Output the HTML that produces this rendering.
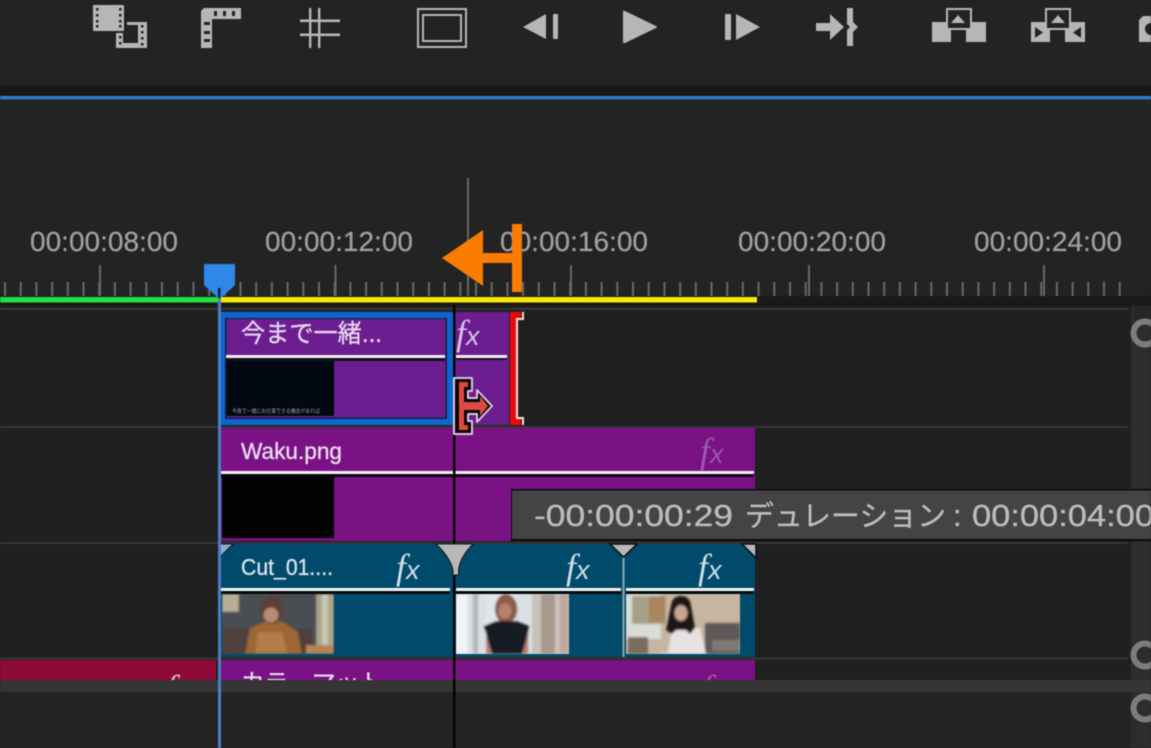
<!DOCTYPE html>
<html lang="ja">
<head>
<meta charset="utf-8">
<title>Timeline</title>
<style>
html,body{margin:0;padding:0;background:#222;width:1151px;height:748px;overflow:hidden}
svg{display:block;filter:blur(0.55px)}
text{font-family:"Liberation Sans","Noto Sans CJK JP",sans-serif}
.tc{font-size:28px;fill:#a0a0a0;stroke:#a0a0a0;stroke-width:.25px}
.fx{font-family:"Liberation Serif",serif;font-style:italic;font-size:36px}
.fx tspan{font-family:"Liberation Sans",sans-serif;font-size:27px}
.lb{stroke-width:.35px}
</style>
</head>
<body>
<svg width="1151" height="748" viewBox="0 0 1151 748" xmlns="http://www.w3.org/2000/svg">
<defs>
<clipPath id="c4"><rect x="0" y="660" width="1151" height="20"/></clipPath>
<clipPath id="t1"><rect x="222" y="594" width="112" height="60"/></clipPath>
<clipPath id="t2"><rect x="456" y="594" width="113" height="60"/></clipPath>
<clipPath id="t3"><rect x="626" y="594" width="114" height="60"/></clipPath>
<filter id="b1" x="-10%" y="-10%" width="120%" height="120%"><feGaussianBlur stdDeviation="1"/></filter>
</defs>

<rect width="1151" height="748" fill="#232323"/>
<rect y="85" width="1151" height="11" fill="#181818"/>
<rect y="96" width="1151" height="3.4" fill="#2b7dcb"/>

<!-- Toolbar icons -->
<g fill="#b6b6b6">
  <rect x="93" y="5" width="31" height="26" rx="1"/>
  <g fill="#222">
    <rect x="96" y="8" width="2.5" height="2.500"/><rect x="96" y="14" width="2.500" height="2.500"/><rect x="96" y="20" width="2.500" height="2.500"/><rect x="96" y="25" width="2.500" height="2.500"/>
    <rect x="119" y="8" width="2.500" height="2.500"/><rect x="119" y="14" width="2.500" height="2.500"/><rect x="119" y="20" width="2.500" height="2.500"/><rect x="119" y="25" width="2.500" height="2.500"/>
  </g>
  <path d="M127 22H147V48H116V33H123V43H138V25H127Z"/>
  <g fill="#222">
    <rect x="119" y="36" width="2.500" height="2.500"/><rect x="119" y="42" width="2.500" height="2.500"/>
    <rect x="141" y="25" width="2.500" height="2.500"/><rect x="141" y="31" width="2.500" height="2.500"/><rect x="141" y="37" width="2.500" height="2.500"/><rect x="141" y="43" width="2.500" height="2.500"/>
  </g>

  <path d="M204 8H241V19H212V48H201V11Z"/>
  <g fill="#222">
    <rect x="214" y="11" width="3" height="5"/><rect x="223" y="11" width="3" height="5"/><rect x="232" y="11" width="3" height="5"/>
    <rect x="204" y="22" width="6" height="3"/><rect x="204" y="31" width="6" height="3"/><rect x="204" y="39" width="6" height="3"/>
  </g>

  <rect x="309" y="8" width="2.4" height="40"/><rect x="318" y="8" width="2.4" height="40"/>
  <rect x="300" y="19.5" width="40" height="2.6"/><rect x="300" y="33.5" width="40" height="2.6"/>

  <path fill-rule="evenodd" d="M417 8H467V48H417ZM419 10V46H465V10Z"/>
  <path fill-rule="evenodd" d="M422 14H462V42H422ZM424 16V40H460V16Z"/>

  <path d="M523 27L546 14V39Z"/><rect x="553" y="14" width="5" height="25" rx="1"/>

  <path d="M623 12Q623 10 625 11L656 26Q658 27 656 28L625 43Q623 44 623 42Z"/>

  <rect x="725" y="14" width="6" height="26" rx="1"/><path d="M736 14L760 27L736 40Z"/>

  <path d="M816 23H830V14L844 27L830 40V31H816Z"/>
  <path d="M847 8H853V22L858 27L853 32V46H847V30L850 27L847 24Z"/>

  <path d="M932 22H947V30H951V42H932Z"/><path d="M971 22H986V42H966V30H971Z"/>
  <path fill-rule="evenodd" d="M946 8H972V30H946ZM948 10V28H970V10Z"/>
  <path d="M958 15L965 23H951Z"/>

  <path fill-rule="evenodd" d="M1031 22H1046V30H1050V42H1031ZM1035 27V38L1043 32.5Z"/>
  <path fill-rule="evenodd" d="M1070 22H1085V42H1065V30H1070ZM1081 27L1073 32.5L1081 38Z"/>
  <path fill-rule="evenodd" d="M1045 8H1071V30H1045ZM1047 10V28H1069V10Z"/>
  <path d="M1058 15L1065 23H1051Z"/>

  <path d="M1139 20L1143 16H1151V42H1139Z"/>
</g>
<circle cx="1151" cy="29" r="6" fill="#232323"/>

<!-- Ruler -->
<rect x="467" y="178" width="2" height="118" fill="#666"/>
<text class="tc" x="30" y="251" textLength="148" lengthAdjust="spacingAndGlyphs">00:00:08:00</text>
<text class="tc" x="265" y="251" textLength="148" lengthAdjust="spacingAndGlyphs">00:00:12:00</text>
<text class="tc" x="500" y="251" textLength="148" lengthAdjust="spacingAndGlyphs">00:00:16:00</text>
<text class="tc" x="738" y="251" textLength="148" lengthAdjust="spacingAndGlyphs">00:00:20:00</text>
<text class="tc" x="974" y="251" textLength="148" lengthAdjust="spacingAndGlyphs">00:00:24:00</text>
<line x1="4" y1="289" x2="1124" y2="289" stroke="#686868" stroke-width="14" stroke-dasharray="2 13.7"/>
<path d="M100 265V296M335.5 265V296M571 265V296M809 265V296M1044 265V296" stroke="#686868" stroke-width="2" fill="none"/>

<!-- Track area -->
<rect y="296" width="1151" height="10" fill="#1a1a1a"/>
<rect y="306" width="1131" height="374" fill="#202020"/>
<rect y="297" width="219" height="5.5" fill="#1fe23f"/>
<rect x="219" y="297" width="538" height="5.5" fill="#f6e800"/>
<g fill="#363636">
  <rect y="308" width="1128" height="2"/><rect y="426" width="1128" height="2"/>
  <rect y="542" width="1128" height="2"/><rect y="657.5" width="1128" height="2"/>
</g>

<!-- Scrollbar -->
<rect x="1131" y="306" width="20" height="442" fill="#2d2d2d"/>
<rect x="1134" y="306" width="17" height="14" fill="#262626"/>
<g fill="none" stroke="#7d7d7d" stroke-width="6">
  <circle cx="1145" cy="333" r="11.5"/><circle cx="1145" cy="655" r="11.5"/><circle cx="1145" cy="708" r="11.5"/>
</g>

<!-- V clip 1 selected -->
<rect x="219" y="312" width="235" height="113" fill="#0b66cf"/>
<rect x="225" y="318" width="222" height="101" fill="#0f1f3a"/>
<rect x="226.5" y="319" width="219" height="98.5" fill="#6c1d90"/>
<rect x="226" y="355" width="219" height="3" fill="#f4eef6"/>
<rect x="226" y="358" width="219" height="3" fill="#12101c"/>
<rect x="226.5" y="361" width="107.5" height="55" fill="#020913"/>
<text class="lb" x="241" y="342" font-size="25" fill="#e5d5ee" stroke="#e5d5ee" textLength="141" lengthAdjust="spacingAndGlyphs">今まで一緒...</text>
<text x="232" y="413" font-size="5.5" fill="#9a9aa0" textLength="88" lengthAdjust="spacingAndGlyphs">今後で一緒にお仕事できる機会があれば</text>

<!-- V clip 1 continued -->
<rect x="455" y="312" width="54" height="113" fill="#6c1d90"/>
<rect x="456" y="355" width="51" height="3" fill="#f4eef6"/>
<rect x="456" y="358" width="51" height="2" fill="#1a1020"/>
<text class="fx" x="456" y="345" fill="#d9c3e4">f<tspan>x</tspan></text>

<!-- Red trim bracket -->
<rect x="510" y="312" width="7" height="113" fill="#e80a0a"/>
<rect x="516" y="312" width="5" height="7" fill="#e80a0a"/>
<rect x="516" y="418" width="5" height="7" fill="#e80a0a"/>
<path d="M523 312V319H517V418H523V425" fill="none" stroke="#f6dddd" stroke-width="2"/>

<!-- Track 2 -->
<rect x="220" y="428" width="535" height="113" fill="#7a1285"/>
<rect x="220" y="471" width="534" height="3" fill="#f4eef6"/>
<rect x="220" y="474" width="534" height="3" fill="#0b0510"/>
<rect x="222" y="477" width="112" height="61" fill="#020203"/>
<text class="lb" x="241" y="459" font-size="23" fill="#e9dcec" stroke="#e9dcec" textLength="101" lengthAdjust="spacingAndGlyphs">Waku.png</text>
<text class="fx" x="700" y="463" fill="#9c5aa6">f<tspan>x</tspan></text>

<!-- Track 3 -->
<rect x="220" y="544" width="535" height="113" fill="#004b6b"/>
<rect x="220" y="588" width="230" height="3" fill="#f2f5f6"/><rect x="456" y="588" width="165" height="3" fill="#f2f5f6"/><rect x="626" y="588" width="128" height="3" fill="#f2f5f6"/>
<rect x="220" y="591" width="230" height="3" fill="#05090c"/><rect x="456" y="591" width="165" height="3" fill="#05090c"/><rect x="626" y="591" width="128" height="3" fill="#05090c"/>
<text class="lb" x="241" y="575" font-size="23" fill="#d5e3ea" stroke="#d5e3ea" textLength="92" lengthAdjust="spacingAndGlyphs">Cut_01....</text>
<text class="fx" x="396" y="579" fill="#cfe0e8">f<tspan>x</tspan></text>
<text class="fx" x="566" y="579" fill="#cfe0e8">f<tspan>x</tspan></text>
<text class="fx" x="698" y="579" fill="#cfe0e8">f<tspan>x</tspan></text>

<!-- Thumb 1 -->
<g clip-path="url(#t1)">
  <rect x="222" y="594" width="112" height="60" fill="#4a4d52"/>
  <g filter="url(#b1)">
    <rect x="222" y="594" width="17" height="18" fill="#b7ae98"/>
    <rect x="222" y="629" width="90" height="25" fill="#4f413a"/>
    <rect x="316" y="594" width="18" height="60" fill="#a9a58b"/>
    <rect x="322" y="594" width="6" height="60" fill="#cbc8ae"/>
    <path d="M245 654L250 628L268 620L284 622L298 632L302 654Z" fill="#9c6636"/>
    <path d="M258 632L282 632L288 654H255Z" fill="#b37c48"/>
    <rect x="306" y="645" width="28" height="9" fill="#b58552"/>
    <ellipse cx="272" cy="610" rx="11" ry="14" fill="#5d4136"/>
    <ellipse cx="271" cy="615" rx="7.500" ry="7.500" fill="#b98a76"/>
  </g>
</g>

<!-- Thumb 2 -->
<g clip-path="url(#t2)">
  <rect x="456" y="594" width="113" height="60" fill="#d9dfe2"/>
  <g filter="url(#b1)">
    <rect x="456" y="594" width="12" height="60" fill="#f0f3f5"/>
    <rect x="473" y="594" width="5" height="60" fill="#aeb5b9"/>
    <rect x="485" y="594" width="30" height="60" fill="#dfe5e8"/>
    <rect x="532" y="594" width="37" height="60" fill="#c9c1b9"/>
    <rect x="541" y="594" width="14" height="60" fill="#a99a8d"/>
    <rect x="560" y="594" width="9" height="60" fill="#bfa79c"/>
    <ellipse cx="506" cy="609" rx="11" ry="15" fill="#8c5a48"/>
    <ellipse cx="505" cy="611" rx="6.500" ry="8" fill="#b4816c"/>
    <rect x="486" y="632" width="7" height="22" fill="#b07f68"/>
    <rect x="521" y="632" width="7" height="22" fill="#b07f68"/>
    <path d="M484 626L496 621H516L529 626L526 640L522 654H492L488 640Z" fill="#161b22"/>
  </g>
</g>

<!-- Thumb 3 -->
<g clip-path="url(#t3)">
  <rect x="626" y="594" width="114" height="60" fill="#c6b6a1"/>
  <g filter="url(#b1)">
    <rect x="626" y="594" width="35" height="45" fill="#d9dcd9"/>
    <rect x="632" y="596" width="34" height="28" fill="#a89f88"/>
    <rect x="649" y="596" width="16" height="26" fill="#a8875f"/>
    <rect x="628" y="637" width="20" height="17" fill="#7a6d5e"/>
    <rect x="705" y="623" width="35" height="31" fill="#5c5a58"/>
    <rect x="712" y="640" width="28" height="11" fill="#7c7975"/>
    <path d="M668 652L672 628H700L706 654H658Z" fill="#e7e2e2"/>
    <path d="M671 606Q672 596 681 596Q690 596 691 606L695 628L690 634L686 630L676 630L672 634L666 630Z" fill="#1a1718"/>
    <ellipse cx="681" cy="613" rx="6.500" ry="8" fill="#cba590"/>
  </g>
</g>

<!-- Track 4 -->
<rect x="0" y="660" width="216" height="20" fill="#8e0b38"/>
<rect x="220" y="660" width="535" height="20" fill="#7a1285"/>
<g clip-path="url(#c4)">
  <text class="lb" x="241" y="691" font-size="24" fill="#e9dcec" stroke="#e9dcec" textLength="142" lengthAdjust="spacingAndGlyphs">カラーマット</text>
  <text class="fx" x="166" y="700" fill="#d8c0c8">f</text>
  <text class="fx" x="702" y="700" fill="#9c5aa6">f<tspan>x</tspan></text>
</g>

<!-- Bottom -->
<rect y="680" width="1151" height="12" fill="#353535"/>

<!-- Transition markers -->
<path d="M220 544H233L221 556H220Z" fill="#8ea9cc" stroke="#10151c" stroke-width="1"/>
<rect x="622.500" y="556" width="2" height="101" fill="#8ba3af"/>
<path d="M610 544H637L623.500 557Z" fill="#b8b8b8" stroke="#0b0d10" stroke-width="1.500"/>
<path d="M742 544H756V558Z" fill="#b8b8b8" stroke="#0b0d10" stroke-width="1.500"/>

<!-- Playhead lines -->
<rect x="218" y="295" width="3" height="453" fill="#4a80c4"/>
<rect x="453" y="305" width="2.500" height="443" fill="#030303"/>
<path d="M436 544H473Q460 557 458.500 570V575H453V570Q450 557 436 544Z" fill="#b8b8b8" stroke="#14181c" stroke-width="1"/>

<!-- Playhead head -->
<path d="M204 264H235V285L222 297H217L204 285Z" fill="#2f87ea"/>
<rect x="218" y="288" width="2.500" height="10" fill="#0c2038"/>

<!-- Trim cursor -->
<path d="M454 378H472V391H468V398H477V390L492 406L477 422V414H468V421H472V434H454Z" fill="#0b0608" stroke="#d9c6dc" stroke-width="2" stroke-linejoin="round"/>
<path d="M459 382H468V387H464V402H480V396L488 406L480 416V410H464V425H468V430H459Z" fill="#dd4a42"/>

<!-- Tooltip -->
<rect x="511" y="489" width="640" height="52" fill="#0b0b0b"/>
<rect x="512" y="490.500" width="639" height="48.500" fill="#444"/>
<g fill="#bdbdbd" stroke="#bdbdbd" stroke-width=".3" font-size="31">
  <text x="534" y="526" textLength="199" lengthAdjust="spacingAndGlyphs">-00:00:00:29</text>
  <text x="745" y="526" font-size="29" textLength="201" lengthAdjust="spacingAndGlyphs">デュレーション</text>
  <text x="953" y="526">:</text>
  <text x="972" y="526" textLength="182" lengthAdjust="spacingAndGlyphs">00:00:04:00</text>
</g>

<!-- Orange arrow -->
<path d="M442 258L483 230V253H512V224H522V292H512V263H483V286Z" fill="#fb7b00"/>
</svg>
</body>
</html>
